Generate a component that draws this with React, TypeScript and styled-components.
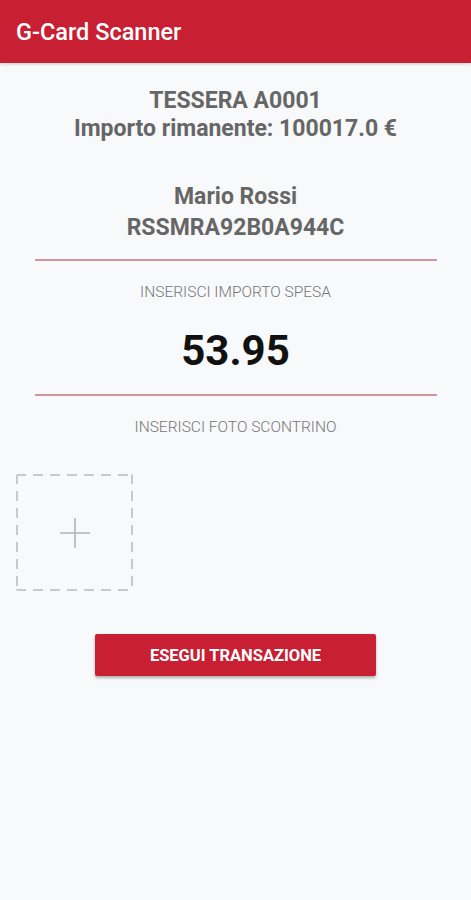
import React from "react";
import styled, { createGlobalStyle } from "styled-components";

const GlobalStyle = createGlobalStyle`
  html, body {
    margin: 0;
    padding: 0;
    background: #f8f9fb;
    font-family: Roboto, "Liberation Sans", sans-serif;
  }
`;

const Screen = styled.div`
  width: 471px;
  min-height: 900px;
  background: #f8f9fb;
`;

const AppBar = styled.header`
  height: 63px;
  background: #c81f33;
  display: flex;
  align-items: center;
  padding: 0 16px;
  box-shadow: 0 1px 3px rgba(0, 0, 0, 0.2);
  h1 {
    margin: 0;
    color: #fff;
    font-size: 23.5px;
    font-weight: 500;
  }
`;

const Content = styled.main`
  display: flex;
  flex-direction: column;
  align-items: center;
  padding-top: 24px;
`;

const InfoBlock = styled.div<{ gap?: number; lh?: number }>`
  text-align: center;
  color: #666;
  font-size: 23px;
  font-weight: 700;
  line-height: ${(p) => p.lh ?? 29}px;
  margin-bottom: ${(p) => p.gap ?? 0}px;
`;

const Divider = styled.hr`
  width: 402px;
  margin: 0;
  border: none;
  height: 2px;
  background: #d49299;
`;

const Label = styled.div`
  color: #757575;
  font-size: 15.5px;
  font-weight: 300;
  line-height: 18px;
  text-transform: uppercase;
  margin-top: 22px;
`;

const Amount = styled.div`
  color: #111;
  font-size: 42px;
  font-weight: 700;
  line-height: 48px;
  margin: 26px 0 19px;
`;

const PhotoRow = styled.div`
  align-self: stretch;
  padding: 38px 16px 0;
`;

const PhotoSlot = styled.button`
  width: 117px;
  height: 117px;
  border: none;
  border-radius: 2px;
  background-color: transparent;
  background-image:
    repeating-linear-gradient(90deg, #c9c9c9 0 10px, transparent 10px 17px),
    repeating-linear-gradient(90deg, #c9c9c9 0 10px, transparent 10px 17px),
    repeating-linear-gradient(180deg, #c9c9c9 0 10px, transparent 10px 17px),
    repeating-linear-gradient(180deg, #c9c9c9 0 10px, transparent 10px 17px);
  background-size: 100% 2px, 100% 2px, 2px 100%, 2px 100%;
  background-position: left top, left bottom, left top, right top;
  background-repeat: no-repeat;
  display: flex;
  align-items: center;
  justify-content: center;
  padding: 0;
`;

const ActionButton = styled.button`
  margin-top: 43px;
  width: 281px;
  height: 42px;
  border: none;
  border-radius: 2px;
  background: #c81f33;
  color: #fff;
  font-family: Roboto, "Liberation Sans", sans-serif;
  font-size: 16.5px;
  font-weight: 700;
  box-shadow: 0 2px 3px rgba(0, 0, 0, 0.3);
`;

export default function App() {
  return (
    <>
      <GlobalStyle />
      <Screen>
        <AppBar>
          <h1>G-Card Scanner</h1>
        </AppBar>
        <Content>
          <InfoBlock gap={38} lh={28}>
            TESSERA A0001
            <br />
            Importo rimanente: 100017.0 €
          </InfoBlock>
          <InfoBlock gap={16} lh={31}>
            Mario Rossi
            <br />
            RSSMRA92B0A944C
          </InfoBlock>
          <Divider />
          <Label>Inserisci importo spesa</Label>
          <Amount>53.95</Amount>
          <Divider />
          <Label>Inserisci foto scontrino</Label>
          <PhotoRow>
            <PhotoSlot>
              <svg width="32" height="32" viewBox="0 0 32 32">
                <path d="M16 1v30M1 16h30" stroke="#b3b3b3" strokeWidth="1.6" fill="none" />
              </svg>
            </PhotoSlot>
          </PhotoRow>
          <ActionButton>ESEGUI TRANSAZIONE</ActionButton>
        </Content>
      </Screen>
    </>
  );
}
